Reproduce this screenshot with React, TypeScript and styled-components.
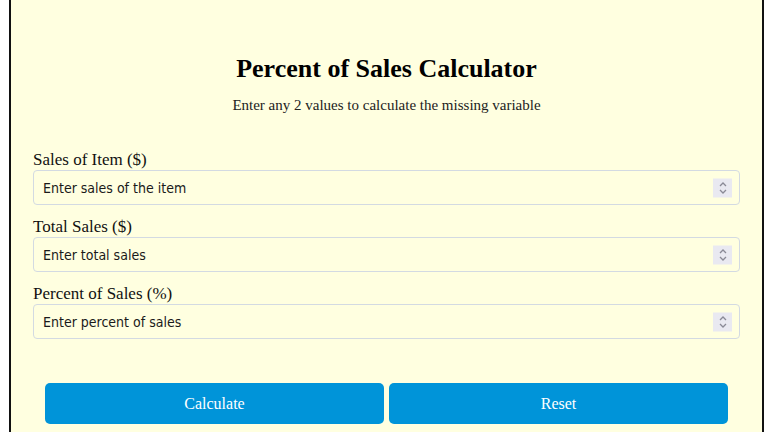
import { useState } from "react";
import styled, { createGlobalStyle } from "styled-components";

const GlobalStyle = createGlobalStyle`
    html, body {
        margin: 0;
        padding: 0;
        background: #ffffff;
        height: 100%;
        overflow: hidden;
    }
`;

// 계산기 전체 패널
const Panel = styled.div`
    margin: 0 4px 0 9px;
    min-height: 440px;
    box-sizing: border-box;
    background: #ffffe0;
    border: 2px solid #111111;
    border-top: none;
    padding: 54px 22px 20px;
    font-family: "Liberation Serif", "Times New Roman", serif;
    color: #111111;
`;

const Title = styled.h1`
    margin: 0;
    text-align: center;
    font-size: 26px;
    font-weight: bold;
    line-height: 30px;
    color: #000000;
`;

const Subtitle = styled.p`
    margin: 11px 0 0;
    text-align: center;
    font-size: 15px;
    line-height: 20px;
    color: #222222;
`;

const Form = styled.form`
    margin-top: 35px;
    display: flex;
    flex-direction: column;
    gap: 12px;
`;

const Field = styled.div`
    display: flex;
    flex-direction: column;
`;

const Label = styled.label`
    font-size: 17px;
    line-height: 20px;
`;

const InputWrap = styled.div`
    position: relative;
`;

const Input = styled.input`
    box-sizing: border-box;
    width: 100%;
    height: 35px;
    margin: 0;
    padding: 0 30px 0 9px;
    background: transparent;
    border: 1px solid #d3dae2;
    border-radius: 4px;
    font-family: "DejaVu Sans Condensed", "DejaVu Sans", Verdana, sans-serif;
    font-size: 14px;
    color: #111111;
    outline: none;
    -moz-appearance: textfield;

    &::placeholder {
        color: #1a1a1a;
        opacity: 1;
    }

    &::-webkit-inner-spin-button,
    &::-webkit-outer-spin-button {
        -webkit-appearance: none;
        margin: 0;
    }
`;

// 숫자 입력의 스핀 버튼 (입력창 위에 겹침)
const Spinner = styled.span`
    position: absolute;
    right: 8px;
    top: 50%;
    transform: translateY(-50%);
    width: 19px;
    height: 19px;
    background: #e9e9f1;
    display: flex;
    align-items: center;
    justify-content: center;
    pointer-events: none;
`;

const Buttons = styled.div`
    margin-top: 44px;
    padding: 0 12px;
    display: grid;
    grid-template-columns: 1fr 1fr;
    gap: 5px;
`;

const Button = styled.button`
    height: 41px;
    border: none;
    border-radius: 5px;
    background: #0094d9;
    color: #ffffff;
    font-family: "Liberation Serif", "Times New Roman", serif;
    font-size: 16px;
    cursor: pointer;
`;

interface IField {
    key: string;
    label: string;
    placeholder: string;
}

const fields: IField[] = [
    { key: "item", label: "Sales of Item ($)", placeholder: "Enter sales of the item" },
    { key: "total", label: "Total Sales ($)", placeholder: "Enter total sales" },
    { key: "percent", label: "Percent of Sales (%)", placeholder: "Enter percent of sales" },
];

function App() {
    const [values, setValues] = useState<Record<string, string>>({});

    const onReset = () => setValues({});

    return (
        <>
            <GlobalStyle />
            <Panel>
                <Title>Percent of Sales Calculator</Title>
                <Subtitle>Enter any 2 values to calculate the missing variable</Subtitle>
                <Form onSubmit={(e) => e.preventDefault()}>
                    {fields.map((f) => (
                        <Field key={f.key}>
                            <Label htmlFor={f.key}>{f.label}</Label>
                            <InputWrap>
                                <Input
                                    id={f.key}
                                    type="number"
                                    placeholder={f.placeholder}
                                    value={values[f.key] ?? ""}
                                    onChange={(e) =>
                                        setValues({ ...values, [f.key]: e.target.value })
                                    }
                                />
                                <Spinner>
                                    <svg width="10" height="15" viewBox="0 0 10 15" fill="none">
                                        <path
                                            d="M2 5.5 L5 2.5 L8 5.5 M2 9.5 L5 12.5 L8 9.5"
                                            stroke="#8a8a96"
                                            strokeWidth="1.3"
                                        />
                                    </svg>
                                </Spinner>
                            </InputWrap>
                        </Field>
                    ))}
                </Form>
                <Buttons>
                    <Button type="button">Calculate</Button>
                    <Button type="button" onClick={onReset}>
                        Reset
                    </Button>
                </Buttons>
            </Panel>
        </>
    );
}

export default App;
